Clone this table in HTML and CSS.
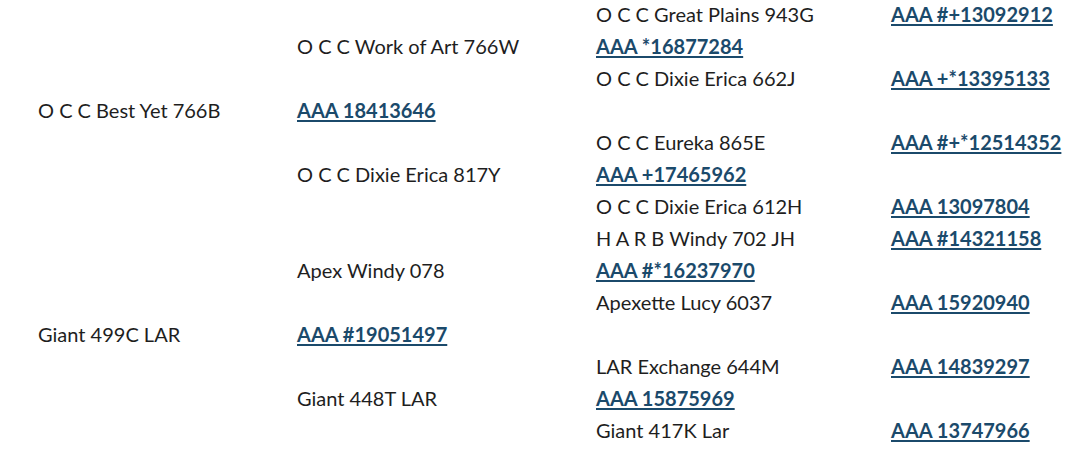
FILE: index.html
```html
<!DOCTYPE html>
<html>
<head>
<meta charset="utf-8">
<link rel="stylesheet" href="styles.css">
</head>
<body>
<div class="pedigree">
  <div></div><div></div><div>O C C Great Plains 943G</div><div><a href="#">AAA #+13092912</a></div>
  <div></div><div>O C C Work of Art 766W</div><div><a href="#">AAA *16877284</a></div><div></div>
  <div></div><div></div><div>O C C Dixie Erica 662J</div><div><a href="#">AAA +*13395133</a></div>
  <div>O C C Best Yet 766B</div><div><a href="#">AAA 18413646</a></div><div></div><div></div>
  <div></div><div></div><div>O C C Eureka 865E</div><div><a href="#">AAA #+*12514352</a></div>
  <div></div><div>O C C Dixie Erica 817Y</div><div><a href="#">AAA +17465962</a></div><div></div>
  <div></div><div></div><div>O C C Dixie Erica 612H</div><div><a href="#">AAA 13097804</a></div>
  <div></div><div></div><div>H A R B Windy 702 JH</div><div><a href="#">AAA #14321158</a></div>
  <div></div><div>Apex Windy 078</div><div><a href="#">AAA #*16237970</a></div><div></div>
  <div></div><div></div><div>Apexette Lucy 6037</div><div><a href="#">AAA 15920940</a></div>
  <div>Giant 499C LAR</div><div><a href="#">AAA #19051497</a></div><div></div><div></div>
  <div></div><div></div><div>LAR Exchange 644M</div><div><a href="#">AAA 14839297</a></div>
  <div></div><div>Giant 448T LAR</div><div><a href="#">AAA 15875969</a></div><div></div>
  <div></div><div></div><div>Giant 417K Lar</div><div><a href="#">AAA 13747966</a></div>
</div>
</body>
</html>
```
FILE: styles.css
```css
html, body {
  margin: 0;
  padding: 0;
  background: #ffffff;
}
body {
  font-family: Lato, "Open Sans", sans-serif;
  font-size: 20px;
  color: #1e1e1e;
}
.pedigree {
  display: grid;
  grid-template-columns: 259px 299px 295px 1fr;
  grid-auto-rows: 32px;
  padding-left: 38px;
  line-height: 28px;
}
.pedigree div {
  white-space: nowrap;
}
.pedigree a {
  color: #1b4a6b;
  font-weight: 700;
  text-decoration: underline;
  text-decoration-thickness: 2px;
  text-underline-offset: 2px;
}
```
